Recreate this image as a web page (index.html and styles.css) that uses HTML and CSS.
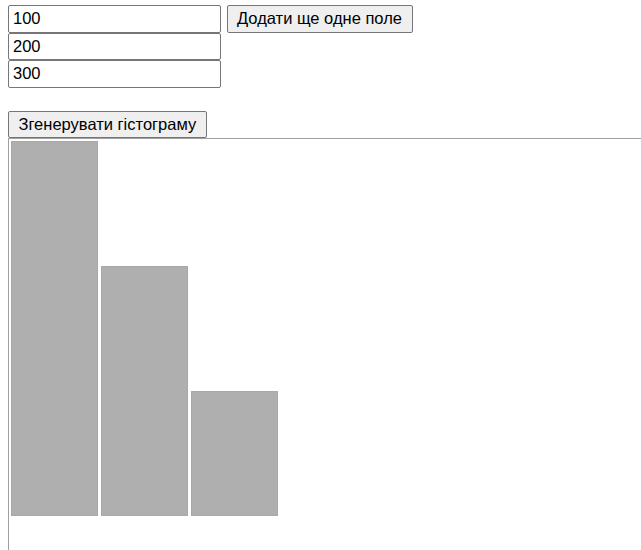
FILE: index.html
```html
<!DOCTYPE html>
<html lang="uk">
<head>
<meta charset="utf-8">
<title>Гістограма</title>
<link rel="stylesheet" href="styles.css">
</head>
<body>
<div class="top">
  <div class="fields">
    <input class="field" type="text" value="100">
    <input class="field" type="text" value="200">
    <input class="field" type="text" value="300">
  </div>
  <button class="btn btn-add" type="button">Додати ще одне поле</button>
</div>
<button class="btn btn-gen" type="button">Згенерувати гістограму</button>
<div class="chart">
  <div class="bars">
    <div class="bar" style="height:375px"></div>
    <div class="bar" style="height:250px"></div>
    <div class="bar" style="height:125px"></div>
  </div>
</div>
</body>
</html>
```
FILE: styles.css
```css
html, body {
  margin: 0;
  padding: 0;
  background: #fff;
}
body {
  padding: 5px 0 0 8px;
  font-family: "Liberation Sans", Arial, sans-serif;
  font-size: 16.5px;
  color: #000;
  overflow: hidden;
}
.top {
  display: flex;
  align-items: flex-start;
  gap: 6px;
}
.fields {
  display: flex;
  flex-direction: column;
}
.field {
  box-sizing: border-box;
  width: 212.5px;
  height: 27.5px;
  margin: 0;
  padding: 0 4px;
  border: 1px solid #767676;
  border-radius: 2px;
  font-family: "Liberation Sans", Arial, sans-serif;
  font-size: 16.5px;
  color: #000;
  background: #fff;
  outline: none;
}
.btn {
  box-sizing: border-box;
  height: 27.5px;
  margin: 0;
  padding: 0 9.5px;
  border: 1px solid #767676;
  border-radius: 2px;
  background: #efefef;
  font-family: "Liberation Sans", Arial, sans-serif;
  font-size: 16.5px;
  color: #000;
}
.btn-gen {
  display: block;
  margin-top: 23.5px;
  height: 27px;
}
.chart {
  margin-top: 0;
  height: 430px;
  border-top: 1px solid #a0a0a0;
  border-left: 1px solid #a0a0a0;
  padding: 2px 0 0 2px;
}
.bars {
  display: flex;
  align-items: flex-end;
  gap: 3px;
  height: 375px;
}
.bar {
  box-sizing: border-box;
  width: 87px;
  background: #afafaf;
  border: 1px solid #a8a8a8;
}
```
